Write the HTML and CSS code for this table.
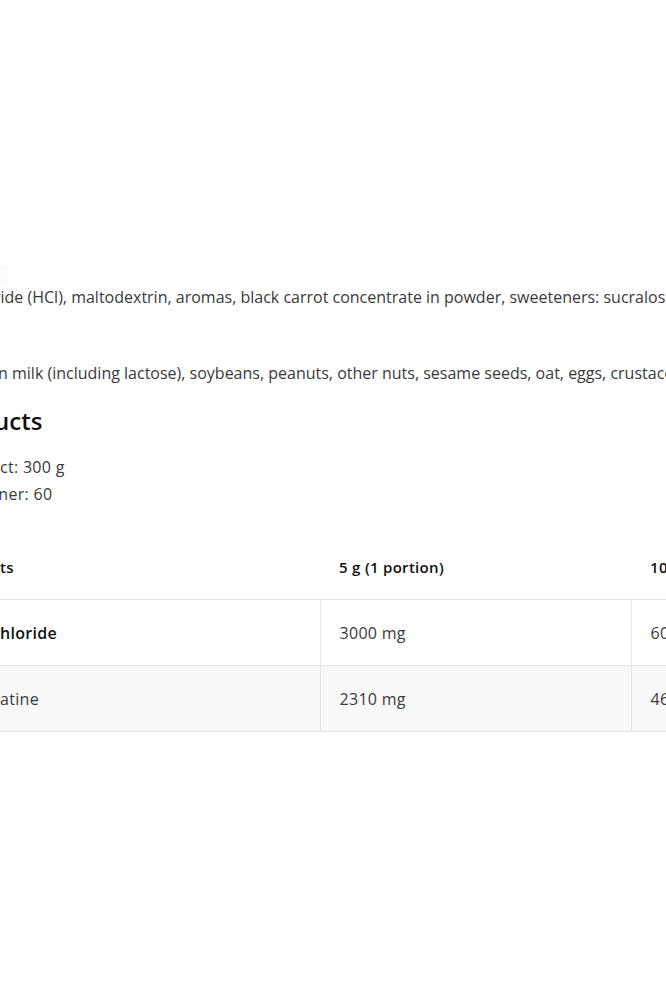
FILE: index.html
```html
<!DOCTYPE HTML>
<html>
  <head>
    <meta http-equiv="content-type" content="text/html; charset=utf-8">
    <title>Product details</title>
    <link rel="stylesheet" href="styles.css">
  </head>
  <body>

    <div id="container">
      <div class="mark"></div>

      <p class="ingredients">ride (HCl), maltodextrin, aromas, black carrot concentrate in powder, sweeteners: sucralose, acesulfame K</p>
      <p class="allergens">in milk (including lactose), soybeans, peanuts, other nuts, sesame seeds, oat, eggs, crustaceans</p>

      <h2 class="sectionTitle">ucts</h2>
      <div class="infoList">
        <div class="infoLine">ct: 300 g</div>
        <div>iner: 60</div>
      </div>

      <table class="factsTable">
        <colgroup>
          <col class="colName">
          <col class="colPortion">
          <col class="colHundred">
        </colgroup>
        <thead>
          <tr>
            <th>ts</th>
            <th>5 g (1 portion)</th>
            <th>100 g</th>
          </tr>
        </thead>
        <tbody>
          <tr>
            <td class="strong">hloride</td>
            <td>3000 mg</td>
            <td>6000 mg</td>
          </tr>
          <tr class="shaded">
            <td>atine</td>
            <td>2310 mg</td>
            <td>4620 mg</td>
          </tr>
        </tbody>
      </table>
    </div>

  </body>
</html>
```

FILE: styles.css
```css
html, body {
  margin: 0;
  padding: 0;
  background-color: #fff;
  overflow: hidden;
}

body {
  width: 666px;
  height: 1000px;
  font-family: "Open Sans", "Liberation Sans", sans-serif;
  font-size: 16px;
  color: #3a3a3a;
}

#container {
  margin-left: -6px;
  padding-top: 265px;
  white-space: nowrap;
}

.mark {
  width: 9px;
  height: 20px;
  margin-left: 6px;
  background-color: #f9fbfc;
}

.ingredients {
  margin: 0;
  line-height: 24px;
}

.allergens {
  margin: 52px 0 0 0;
  line-height: 24px;
}

.sectionTitle {
  margin: 20px 0 0 0;
  font-size: 24px;
  font-weight: 600;
  line-height: 32px;
  color: #111;
}

.infoList {
  margin-top: 17px;
  line-height: 27px;
  letter-spacing: 0.3px;
}

.infoLine {
  padding-left: 6px;
}

.factsTable {
  margin-top: 26px;
  width: 1000px;
  table-layout: fixed;
  border-collapse: collapse;
  letter-spacing: 0.3px;
}

.colName {
  width: 326px;
}

.colPortion {
  width: 311px;
}

.factsTable th {
  height: 65px;
  padding: 0 19px;
  text-align: left;
  font-size: 15px;
  font-weight: 600;
  color: #111;
  border-bottom: 1px solid #e4e4e4;
}

.factsTable td {
  height: 65px;
  padding: 0 19px;
  border-bottom: 1px solid #e4e4e4;
  border-left: 1px solid #e4e4e4;
}

.factsTable th:first-child,
.factsTable td:first-child {
  padding-left: 6px;
  border-left: none;
}

.factsTable .strong {
  font-weight: 600;
  color: #111;
}

.factsTable .shaded td {
  background-color: #f8f8f8;
}
```
